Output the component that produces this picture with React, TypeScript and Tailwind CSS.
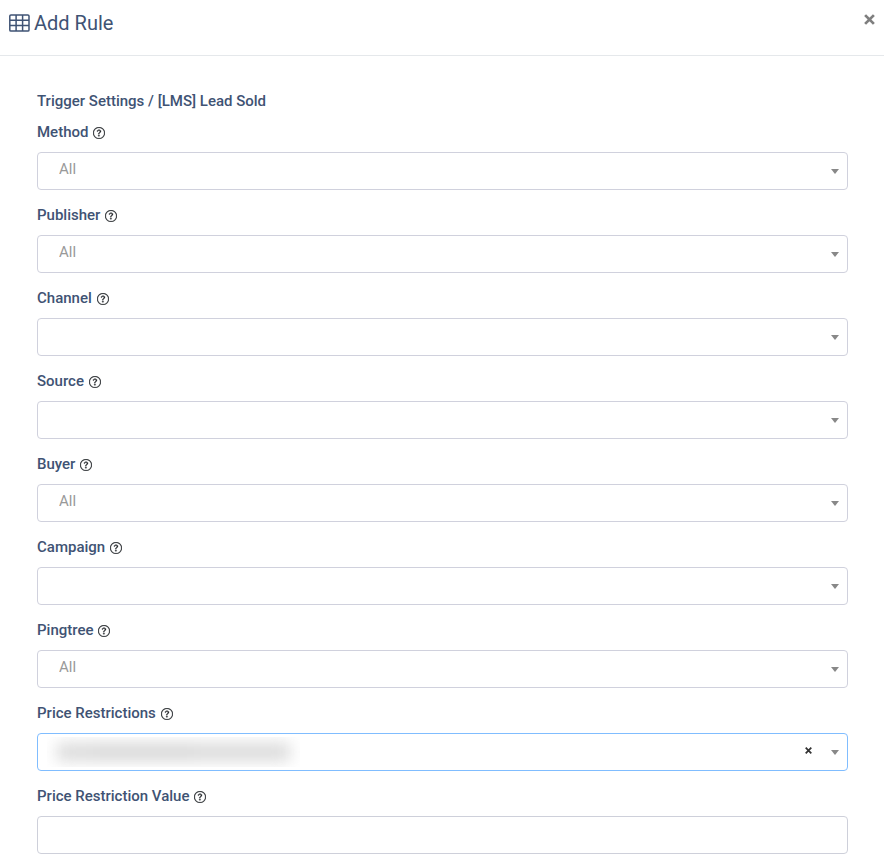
import { useState } from 'react';
import { BsQuestionCircle } from 'react-icons/bs';

interface Field {
  id: string;
  label: string;
  placeholder?: string;
}

const fields: Field[] = [
  { id: 'method', label: 'Method', placeholder: 'All' },
  { id: 'publisher', label: 'Publisher', placeholder: 'All' },
  { id: 'channel', label: 'Channel' },
  { id: 'source', label: 'Source' },
  { id: 'buyer', label: 'Buyer', placeholder: 'All' },
  { id: 'campaign', label: 'Campaign' },
  { id: 'pingtree', label: 'Pingtree', placeholder: 'All' },
];

const GridIcon = () => (
  <svg width="21" height="18" viewBox="0 0 21 18" fill="none" stroke="currentColor" strokeWidth="1.5" aria-hidden="true">
    <rect x="0.8" y="0.9" width="19.2" height="16.2" rx="1.2" />
    <path d="M1 6.2h19M1 11.5h19M7.1 1v16M13.6 1v16" />
  </svg>
);

const CloseIcon = ({ className }: { className: string }) => (
  <svg viewBox="0 0 10 10" className={className} fill="none" stroke="currentColor" strokeWidth="2.5" aria-hidden="true">
    <path d="M1 1l8 8M9 1l-8 8" />
  </svg>
);

const Caret = () => (
  <svg width="8" height="5" viewBox="0 0 8 5" className="pointer-events-none absolute right-[9px] top-[17px] fill-[#888888]" aria-hidden="true">
    <path d="M0 0h8L4 5z" />
  </svg>
);

const FieldLabel = ({ id, label }: { id: string; label: string }) => (
  <div className="mb-2 flex h-6 items-center gap-[5px]">
    <label htmlFor={id}>{label}</label>
    <BsQuestionCircle size={12} className="mt-px text-[#212529]" strokeWidth="0.4" />
  </div>
);

const App: React.FC = () => {
  const [values, setValues] = useState<Record<string, string>>({});
  const [price, setPrice] = useState('');

  return (
    <div className="min-h-screen bg-white font-[Roboto,sans-serif] text-[#3f5374]">
      {/* Header */}
      <header className="flex h-14 items-start justify-between border-b border-[#e5e8eb] px-[9px] pt-2">
        <h1 className="flex items-center gap-1 text-xl leading-[30px]">
          <GridIcon />
          Add Rule
        </h1>
        <button type="button" aria-label="Close" className="pt-1.5 text-[#7f7f7f]">
          <CloseIcon className="size-[11px]" />
        </button>
      </header>

      {/* Rule form */}
      <form className="pb-2 pl-[37px] pr-9 pt-[33px] text-[15px] font-medium leading-6">
        <h2 className="mb-[7px]">Trigger Settings / [LMS] Lead Sold</h2>

        <div className="space-y-[13px]">
          {fields.map((field) => (
            <div key={field.id}>
              <FieldLabel id={field.id} label={field.label} />
              <div className="relative">
                <select
                  id={field.id}
                  value={values[field.id] ?? ''}
                  onChange={(e) => setValues({ ...values, [field.id]: e.target.value })}
                  className="block h-[38px] w-full appearance-none rounded border border-[#d0d1dd] bg-white pb-1 pl-[21px] font-normal text-[#999999] outline-none focus:border-[#80bdff]"
                >
                  <option value="">{field.placeholder ?? ''}</option>
                </select>
                <Caret />
              </div>
            </div>
          ))}

          <div>
            <FieldLabel id="price-restrictions" label="Price Restrictions" />
            <div className="relative">
              <select
                id="price-restrictions"
                className="block h-[38px] w-full appearance-none rounded border border-[#80bdff] bg-white outline-none"
              >
                <option value=""></option>
              </select>
              {/* Obscured value */}
              <div className="pointer-events-none absolute left-2.5 top-1 h-[30px] w-[253px] overflow-hidden" aria-hidden="true">
                <div className="mx-2.5 mt-[7px] flex h-4 blur-[8px]">
                  <span className="w-9 bg-[#d6d6d6]" />
                  <span className="flex-1 bg-[#d3d3d3]" />
                  <span className="w-24 bg-[#d6d6d6]" />
                </div>
              </div>
              <button type="button" aria-label="Clear" className="absolute right-9 top-3.5 text-[#333333]">
                <CloseIcon className="size-[7px]" />
              </button>
              <Caret />
            </div>
          </div>

          <div>
            <FieldLabel id="price-value" label="Price Restriction Value" />
            <input
              id="price-value"
              type="text"
              value={price}
              onChange={(e) => setPrice(e.target.value)}
              className="block h-[38px] w-full rounded border border-[#ced0da] bg-white px-3 font-normal outline-none focus:border-[#80bdff]"
            />
          </div>
        </div>
      </form>
    </div>
  );
};

export default App;
